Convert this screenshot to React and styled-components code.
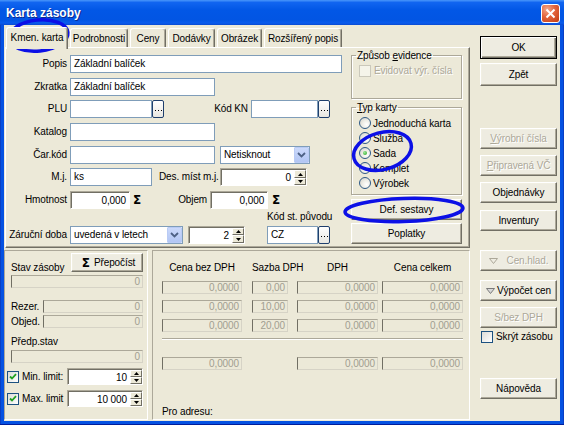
import React from "react";
import styled, { createGlobalStyle } from "styled-components";

const FACE = "#ece9d8";
const LIGHT = "#f1efe2";
const SHADOW = "#aca899";
const DARK = "#716f64";
const XP_EDGE = "#7f9db9";
const GREY = "#aca899";

const GlobalStyle = createGlobalStyle`
  html, body { margin: 0; padding: 0; background: #fff; }
  body {
    font-family: "Liberation Sans", Arial, sans-serif;
    font-size: 10px;
    letter-spacing: -0.1px;
    color: #000;
  }
  *, *::before, *::after { box-sizing: border-box; }
`;

const Window = styled.div`
  position: relative;
  width: 564px;
  height: 425px;
  display: flex;
  flex-direction: column;
  padding: 0 4px 4px;
  background: #0552e2;
  box-shadow: inset 0 -1px 0 #001d9c, inset 1px 0 0 #0a3fc4, inset -1px 0 0 #0a3fc4;
  overflow: hidden;
`;

const TitleBar = styled.div`
  height: 25px;
  margin: 0 -4px;
  padding: 0 4px 0 6px;
  display: flex;
  align-items: center;
  justify-content: space-between;
  background: linear-gradient(
    to bottom,
    #4a97fb 0%,
    #1165f0 10%,
    #0257e6 40%,
    #0255e3 80%,
    #0a5ced 92%,
    #0a4ad0 100%
  );
`;

const Title = styled.span`
  color: #fff;
  font-size: 12px;
  font-weight: bold;
  letter-spacing: 0;
  text-shadow: 1px 1px 0 #0b2a8f;
`;

const CloseButton = styled.div`
  width: 19px;
  height: 19px;
  margin-top: 1px;
  border: 1px solid #fff;
  border-radius: 3px;
  background: radial-gradient(circle at 30% 25%, #f3a78a 0%, #e2643c 45%, #c23a10 100%);
  display: flex;
  align-items: center;
  justify-content: center;
`;

const Body = styled.div`
  flex: 1;
  display: flex;
  gap: 10px;
  padding: 2px 3px 0 0;
  background: ${FACE};
`;

const LeftColumn = styled.div`
  width: 466px;
  display: flex;
  flex-direction: column;
`;

const TabStrip = styled.div`
  position: relative;
  z-index: 1;
  height: 20px;
  display: flex;
  align-items: flex-end;
  gap: 2px;
  padding-left: 2px;
`;

const Tab = styled.div`
  width: ${(p) => p.$w}px;
  height: ${(p) => (p.$active ? 22 : 19)}px;
  margin-bottom: ${(p) => (p.$active ? -2 : 0)}px;
  padding-bottom: ${(p) => (p.$active ? 2 : 0)}px;
  flex-shrink: 0;
  display: flex;
  align-items: center;
  justify-content: center;
  white-space: nowrap;
  background: ${FACE};
  border-top: 1px solid #fff;
  border-left: 1px solid #fff;
  border-right: 1px solid ${DARK};
  border-radius: 3px 3px 0 0;
  box-shadow: inset -1px 0 0 ${SHADOW};
`;

const TabPanel = styled.div`
  margin-left: 1px;
  width: 465px;
  height: 201px;
  display: flex;
  border: 1px solid;
  border-color: #fff ${DARK} ${DARK} #fff;
  box-shadow: inset -1px -1px 0 ${SHADOW};
`;

const FormColumn = styled.div`
  width: 340px;
  padding-top: 7px;
  display: flex;
  flex-direction: column;
  gap: 4.7px;
`;

const Row = styled.div`
  height: 18px;
  display: flex;
  align-items: center;
`;

const LastRow = styled(Row)`
  height: auto;
  align-items: flex-end;
  margin-top: -3px;
`;

const Label = styled.span`
  width: ${(p) => p.$w || 61}px;
  margin-left: ${(p) => p.$ml || 0}px;
  margin-right: 3px;
  flex-shrink: 0;
  text-align: right;
  white-space: nowrap;
  line-height: 18px;
`;

const Field = styled.div`
  width: ${(p) => p.$w}px;
  height: 18px;
  flex-shrink: 0;
  padding: 0 3px;
  border: 1px solid ${XP_EDGE};
  background: #fff;
  line-height: 16px;
  white-space: nowrap;
  overflow: hidden;
`;

const DotsButton = styled.div`
  width: 12px;
  height: 18px;
  flex-shrink: 0;
  border: 1px solid #1f3f6d;
  border-radius: 2px;
  background: linear-gradient(to bottom, #ffffff, #e8e7e1);
  display: flex;
  align-items: center;
  justify-content: center;
  padding-top: 3px;
`;

const Combo = styled.div`
  width: ${(p) => p.$w}px;
  height: 18px;
  margin-left: ${(p) => p.$ml || 0}px;
  flex-shrink: 0;
  display: flex;
  align-items: center;
  padding-left: 3px;
  border: 1px solid ${XP_EDGE};
  background: #fff;
  white-space: nowrap;
`;

const ComboArrow = styled.span`
  margin-left: auto;
  width: 15px;
  height: 16px;
  border: 1px solid #b9cbf5;
  border-radius: 1px;
  background: linear-gradient(to bottom, #cbd9fb 0%, #b2c6f4 100%);
  display: flex;
  align-items: center;
  justify-content: center;
`;

const Sunken = styled.div`
  width: ${(p) => p.$w}px;
  height: ${(p) => p.$h || 18}px;
  margin-left: ${(p) => p.$ml || 0}px;
  flex-shrink: 0;
  display: flex;
  padding: 1px 0 0 1px;
  border: 1px solid;
  border-color: ${SHADOW} #fff #fff ${SHADOW};
  box-shadow: inset 1px 1px 0 ${DARK};
  background: #fff;
`;

const NumberText = styled.span`
  flex: 1;
  text-align: right;
  padding-right: 3px;
  align-self: center;
  white-space: nowrap;
`;

const SpinButtons = styled.div`
  width: 12px;
  display: flex;
  flex-direction: column;
`;

const SpinButton = styled.div`
  flex: 1;
  display: flex;
  align-items: center;
  justify-content: center;
  background: ${FACE};
  border: 1px solid;
  border-color: #fff ${DARK} ${DARK} #fff;
`;

const Sigma = styled.span`
  margin-left: ${(p) => p.$ml || 3}px;
  font-family: "DejaVu Sans", sans-serif;
  font-size: 12px;
  font-weight: bold;
  line-height: 18px;
`;

const CodeGroup = styled.div`
  margin-left: 22px;
  display: flex;
  flex-direction: column;
`;

const CodeLabel = styled.span`
  line-height: 12px;
  margin-bottom: 3px;
  white-space: nowrap;
`;

const Pair = styled.div`
  display: flex;
`;

const SideColumn = styled.div`
  width: 111px;
  margin-left: 5px;
  padding-top: 1.5px;
  display: flex;
  flex-direction: column;
`;

const Group = styled.fieldset`
  height: ${(p) => p.$h}px;
  margin: ${(p) => p.$mt || 0}px 0 0;
  padding: ${(p) => p.$pt || 4}px 0 0 7px;
  min-width: 0;
  border: 1px solid ${SHADOW};
  box-shadow: 1px 1px 0 #fff, inset 1px 1px 0 #fff;
`;

const Legend = styled.legend`
  height: 11px;
  margin-left: -3px;
  padding: 0 1px;
  line-height: 11px;
`;

const OptionRow = styled.div`
  height: ${(p) => p.$h || 15}px;
  margin-top: ${(p) => p.$mt || 0}px;
  margin-left: ${(p) => p.$ml || 0}px;
  display: flex;
  align-items: center;
  gap: ${(p) => p.$gap || 3}px;
  color: ${(p) => (p.$disabled ? GREY : "#000")};
  text-shadow: ${(p) => (p.$disabled ? "1px 1px 0 #fff" : "none")};
  white-space: nowrap;
`;

const CheckBox = styled.span`
  width: 12px;
  height: 12px;
  flex-shrink: 0;
  display: inline-flex;
  align-items: center;
  justify-content: center;
  margin-left: ${(p) => p.$ml || 0}px;
  border: 1px solid ${(p) => (p.$disabled ? "#cac8bb" : "#1c5180")};
  background: ${(p) =>
    p.$disabled ? "#f5f4ea" : "linear-gradient(135deg, #dcdcd7 0%, #ffffff 100%)"};
`;

const Radio = styled.span`
  width: 12px;
  height: 12px;
  flex-shrink: 0;
  border-radius: 50%;
  border: 1px solid #2f5a86;
  background: radial-gradient(circle at 65% 65%, #ffffff 0%, #eeede6 45%, #cfcec6 100%);
  display: inline-flex;
  align-items: center;
  justify-content: center;

  &::after {
    content: "";
    display: ${(p) => (p.$checked ? "block" : "none")};
    width: 4px;
    height: 4px;
    border-radius: 50%;
    background: radial-gradient(circle at 35% 35%, #9ce896, #21a121);
  }
`;

const Button = styled.div`
  width: ${(p) => (p.$w ? `${p.$w}px` : "100%")};
  height: ${(p) => p.$h || 21}px;
  margin-top: ${(p) => p.$mt || 0}px;
  flex-shrink: 0;
  display: flex;
  align-items: center;
  justify-content: center;
  gap: ${(p) => p.$gap || 0}px;
  white-space: nowrap;
  background: #eeece1;
  color: ${(p) => (p.$disabled ? GREY : "#000")};
  text-shadow: ${(p) => (p.$disabled ? "1px 1px 0 #fff" : "none")};
  border: 1px solid;
  border-color: ${(p) => (p.$default ? "#000" : `#fff ${DARK} ${DARK} #fff`)};
  box-shadow: ${(p) =>
    p.$default
      ? `inset 1px 1px 0 #fff, inset -1px -1px 0 ${DARK}, inset -2px -2px 0 ${SHADOW}`
      : `inset -1px -1px 0 ${SHADOW}, inset 1px 1px 0 ${LIGHT}`};
`;

const LowerRow = styled.div`
  margin-top: 2px;
  height: 170px;
  display: flex;
  gap: 4px;
`;

const SunkenPanel = styled.div`
  border: 1px solid;
  border-color: ${SHADOW} #fff #fff ${SHADOW};
  display: flex;
  flex-direction: column;
`;

const StockPanel = styled(SunkenPanel)`
  width: 144px;
  padding: 2px 4px 0 6px;
`;

const PricePanel = styled(SunkenPanel)`
  flex: 1;
  padding: 11px 0 0 9px;
`;

const StockHead = styled.div`
  height: 19px;
  display: flex;
  justify-content: space-between;
  align-items: flex-end;
`;

const SmallLabel = styled.span`
  margin-top: ${(p) => p.$mt || 0}px;
  margin-bottom: ${(p) => p.$mb || 0}px;
  flex-shrink: 0;
  line-height: 12px;
  white-space: nowrap;
`;

const GreyField = styled.div`
  width: ${(p) => (p.$w ? `${p.$w}px` : "100%")};
  height: 13px;
  margin-top: ${(p) => p.$mt || 0}px;
  justify-self: end;
  flex-shrink: 0;
  padding-right: 2px;
  text-align: right;
  line-height: 11px;
  color: #a19e90;
  border: 1px solid;
  border-color: ${SHADOW} #d6d3c6 #d6d3c6 ${DARK};
  white-space: nowrap;
`;

const StockRow = styled.div`
  height: ${(p) => p.$h || 13}px;
  margin-top: ${(p) => p.$mt || 0}px;
  display: flex;
  align-items: center;
  justify-content: space-between;
`;

const LimitLabel = styled.div`
  display: flex;
  align-items: center;
  gap: 3px;
  white-space: nowrap;
`;

const PriceGrid = styled.div`
  display: grid;
  grid-template-columns: 80px 46px 90px 85px;
  grid-auto-rows: 13px;
  row-gap: 6px;
`;

const HeadCell = styled.div`
  width: ${(p) => p.$w}px;
  justify-self: end;
  height: 12px;
  text-align: center;
  line-height: 12px;
  white-space: nowrap;
`;

const Separator = styled.div`
  grid-column: 1 / -1;
  align-self: start;
  height: 2px;
  border-top: 1px solid ${SHADOW};
  border-bottom: 1px solid #fff;
`;

const AddressLabel = styled.span`
  margin-top: 36px;
  line-height: 12px;
`;

const ButtonColumn = styled.div`
  width: 77px;
  padding-top: 9px;
  display: flex;
  flex-direction: column;
`;

const Annotations = styled.svg`
  position: absolute;
  left: 0;
  top: 0;
  width: 564px;
  height: 425px;
  pointer-events: none;
`;

const Dots = () => (
  <DotsButton>
    <svg width="7" height="1" viewBox="0 0 7 1">
      <rect x="0" y="0" width="1" height="1" fill="#000" />
      <rect x="3" y="0" width="1" height="1" fill="#000" />
      <rect x="6" y="0" width="1" height="1" fill="#000" />
    </svg>
  </DotsButton>
);

const Chevron = () => (
  <ComboArrow>
    <svg width="9" height="6" viewBox="0 0 9 6">
      <polyline points="1,1 4.5,4.5 8,1" fill="none" stroke="#4d6185" strokeWidth="1.8" />
    </svg>
  </ComboArrow>
);

const Arrow = ({ up }) => (
  <svg width="5" height="3" viewBox="0 0 5 3">
    <polygon points={up ? "2.5,0 5,3 0,3" : "0,0 5,0 2.5,3"} fill="#000" />
  </svg>
);

const Spin = ({ w, h, value, ml }) => (
  <Sunken $w={w} $h={h} $ml={ml}>
    <NumberText>{value}</NumberText>
    <SpinButtons>
      <SpinButton>
        <Arrow up />
      </SpinButton>
      <SpinButton>
        <Arrow />
      </SpinButton>
    </SpinButtons>
  </Sunken>
);

const Check = () => (
  <svg width="8" height="7" viewBox="0 0 8 7">
    <polyline points="1,3.5 3,5.5 7,1.2" fill="none" stroke="#21a121" strokeWidth="1.8" />
  </svg>
);

const Triangle = ({ disabled }) => (
  <svg width="9" height="6" viewBox="0 0 9 6">
    <polygon
      points="0.5,0.5 8.5,0.5 4.5,5.5"
      fill={disabled ? "none" : "#d8d8d8"}
      stroke={disabled ? GREY : "#7a7a7a"}
    />
  </svg>
);

const tabs = [
  { label: "Kmen. karta", w: 62, active: true },
  { label: "Podrobnosti", w: 58 },
  { label: "Ceny", w: 36 },
  { label: "Dodávky", w: 47 },
  { label: "Obrázek", w: 45 },
  { label: "Rozšířený popis", w: 78 },
];

const cardTypes = [
  { label: "Jednoduchá karta" },
  { label: "Služba" },
  { label: "Sada", checked: true },
  { label: "Komplet" },
  { label: "Výrobek" },
];

const priceRows = ["0,00", "10,00", "20,00"];

export default function App() {
  return (
    <>
      <GlobalStyle />
      <Window>
        <TitleBar>
          <Title>Karta zásoby</Title>
          <CloseButton>
            <svg width="11" height="11" viewBox="0 0 11 11">
              <path d="M1.5 1.5 L9.5 9.5 M9.5 1.5 L1.5 9.5" stroke="#fff" strokeWidth="2" />
            </svg>
          </CloseButton>
        </TitleBar>

        <Body>
          <LeftColumn>
            <TabStrip>
              {tabs.map((t) => (
                <Tab key={t.label} $w={t.w} $active={t.active}>
                  {t.label}
                </Tab>
              ))}
            </TabStrip>

            <TabPanel>
              <FormColumn>
                <Row>
                  <Label>Popis</Label>
                  <Field $w={272}>Základní balíček</Field>
                </Row>
                <Row>
                  <Label>Zkratka</Label>
                  <Field $w={145}>Základní balíček</Field>
                </Row>
                <Row>
                  <Label>PLU</Label>
                  <Field $w={82} />
                  <Dots />
                  <Label $w={84}>Kód KN</Label>
                  <Field $w={67} />
                  <Dots />
                </Row>
                <Row>
                  <Label>Katalog</Label>
                  <Field $w={145} />
                </Row>
                <Row>
                  <Label>Čar.kód</Label>
                  <Field $w={145} />
                  <Combo $w={90} $ml={5}>
                    Netisknout
                    <Chevron />
                  </Combo>
                </Row>
                <Row>
                  <Label>M.j.</Label>
                  <Field $w={82}>ks</Field>
                  <Label $w={58} $ml={7}>
                    Des. míst m.j.
                  </Label>
                  <Spin w={87} value="0" />
                </Row>
                <Row>
                  <Label>Hmotnost</Label>
                  <Sunken $w={60}>
                    <NumberText>0,000</NumberText>
                  </Sunken>
                  <Sigma>Σ</Sigma>
                  <Label $w={66}>Objem</Label>
                  <Sunken $w={58}>
                    <NumberText>0,000</NumberText>
                  </Sunken>
                  <Sigma $ml={4}>Σ</Sigma>
                </Row>
                <LastRow>
                  <Label>Záruční doba</Label>
                  <Combo $w={113}>
                    uvedená v letech
                    <Chevron />
                  </Combo>
                  <Spin w={57} value="2" ml={5} />
                  <CodeGroup>
                    <CodeLabel>Kód st. původu</CodeLabel>
                    <Pair>
                      <Field $w={51}>CZ</Field>
                      <Dots />
                    </Pair>
                  </CodeGroup>
                </LastRow>
              </FormColumn>

              <SideColumn>
                <Group $h={49.5}>
                  <Legend>
                    Způsob <u>e</u>vidence
                  </Legend>
                  <OptionRow $h={12} $disabled>
                    <CheckBox $disabled />
                    Evidovat výr. čísla
                  </OptionRow>
                </Group>
                <Group $h={93.5} $mt={2.5} $pt={3}>
                  <Legend>
                    <u>T</u>yp karty
                  </Legend>
                  {cardTypes.map((c) => (
                    <OptionRow key={c.label} $gap={2}>
                      <Radio $checked={c.checked} />
                      {c.label}
                    </OptionRow>
                  ))}
                </Group>
                <Button $mt={4}>Def. sestavy</Button>
                <Button $mt={3}>Poplatky</Button>
              </SideColumn>
            </TabPanel>

            <LowerRow>
              <StockPanel>
                <StockHead>
                  <SmallLabel $mb={-2}>Stav zásoby</SmallLabel>
                  <Button $w={72} $h={19} $gap={4}>
                    <Sigma $ml={0}>Σ</Sigma>
                    Přepočíst
                  </Button>
                </StockHead>
                <GreyField $mt={3}>0</GreyField>
                <StockRow $mt={12}>
                  <SmallLabel>Rezer.</SmallLabel>
                  <GreyField $w={100}>0</GreyField>
                </StockRow>
                <StockRow $mt={2}>
                  <SmallLabel>Objed.</SmallLabel>
                  <GreyField $w={100}>0</GreyField>
                </StockRow>
                <SmallLabel $mt={8}>Předp.stav</SmallLabel>
                <GreyField $mt={2}>0</GreyField>
                <StockRow $h={17} $mt={5}>
                  <LimitLabel>
                    <CheckBox $ml={-4}>
                      <Check />
                    </CheckBox>
                    Min. limit:
                  </LimitLabel>
                  <Spin w={76} h={17} value="10" />
                </StockRow>
                <StockRow $h={17} $mt={5}>
                  <LimitLabel>
                    <CheckBox $ml={-4}>
                      <Check />
                    </CheckBox>
                    Max. limit
                  </LimitLabel>
                  <Spin w={76} h={17} value="10 000" />
                </StockRow>
              </StockPanel>

              <PricePanel>
                <PriceGrid>
                  <HeadCell $w={80}>Cena bez DPH</HeadCell>
                  <HeadCell $w={36}>Sazba DPH</HeadCell>
                  <HeadCell $w={81}>DPH</HeadCell>
                  <HeadCell $w={81}>Cena celkem</HeadCell>
                  {priceRows.map((rate) => (
                    <React.Fragment key={rate}>
                      <GreyField $w={80}>0,0000</GreyField>
                      <GreyField $w={36}>{rate}</GreyField>
                      <GreyField $w={81}>0,0000</GreyField>
                      <GreyField $w={81}>0,0000</GreyField>
                    </React.Fragment>
                  ))}
                  <Separator />
                  <GreyField $w={80}>0,0000</GreyField>
                  <span />
                  <GreyField $w={81}>0,0000</GreyField>
                  <GreyField $w={81}>0,0000</GreyField>
                </PriceGrid>
                <AddressLabel>Pro adresu:</AddressLabel>
              </PricePanel>
            </LowerRow>
          </LeftColumn>

          <ButtonColumn>
            <Button $h={23} $default>
              OK
            </Button>
            <Button $h={23} $mt={4}>
              Zpět
            </Button>
            <Button $mt={42} $disabled>
              <span>
                <u>V</u>ýrobní čísla
              </span>
            </Button>
            <Button $mt={6} $disabled>
              <span>
                <u>P</u>řipravená VČ
              </span>
            </Button>
            <Button $mt={6}>Objednávky</Button>
            <Button $mt={7}>Inventury</Button>
            <Button $mt={19} $gap={9} $disabled>
              <Triangle disabled />
              Cen.hlad.
            </Button>
            <Button $mt={9} $gap={2}>
              <Triangle />
              Výpočet cen
            </Button>
            <Button $mt={6} $disabled>
              S/bez DPH
            </Button>
            <OptionRow $h={13} $gap={3} $mt={2} $ml={1}>
              <CheckBox />
              Skrýt zásobu
            </OptionRow>
            <Button $mt={35}>Nápověda</Button>
          </ButtonColumn>
        </Body>

        <Annotations viewBox="0 0 564 425">
          <g fill="none" stroke="#0c10e6" strokeWidth="3.5">
            <ellipse cx="38.5" cy="35.5" rx="29.5" ry="15.5" transform="rotate(-6 38.5 35.5)" />
            <ellipse cx="382.5" cy="151" rx="29.5" ry="18.5" transform="rotate(-15 382.5 151)" />
            <ellipse cx="404" cy="210" rx="59" ry="11.5" transform="rotate(-2 404 210)" />
          </g>
        </Annotations>
      </Window>
    </>
  );
}
